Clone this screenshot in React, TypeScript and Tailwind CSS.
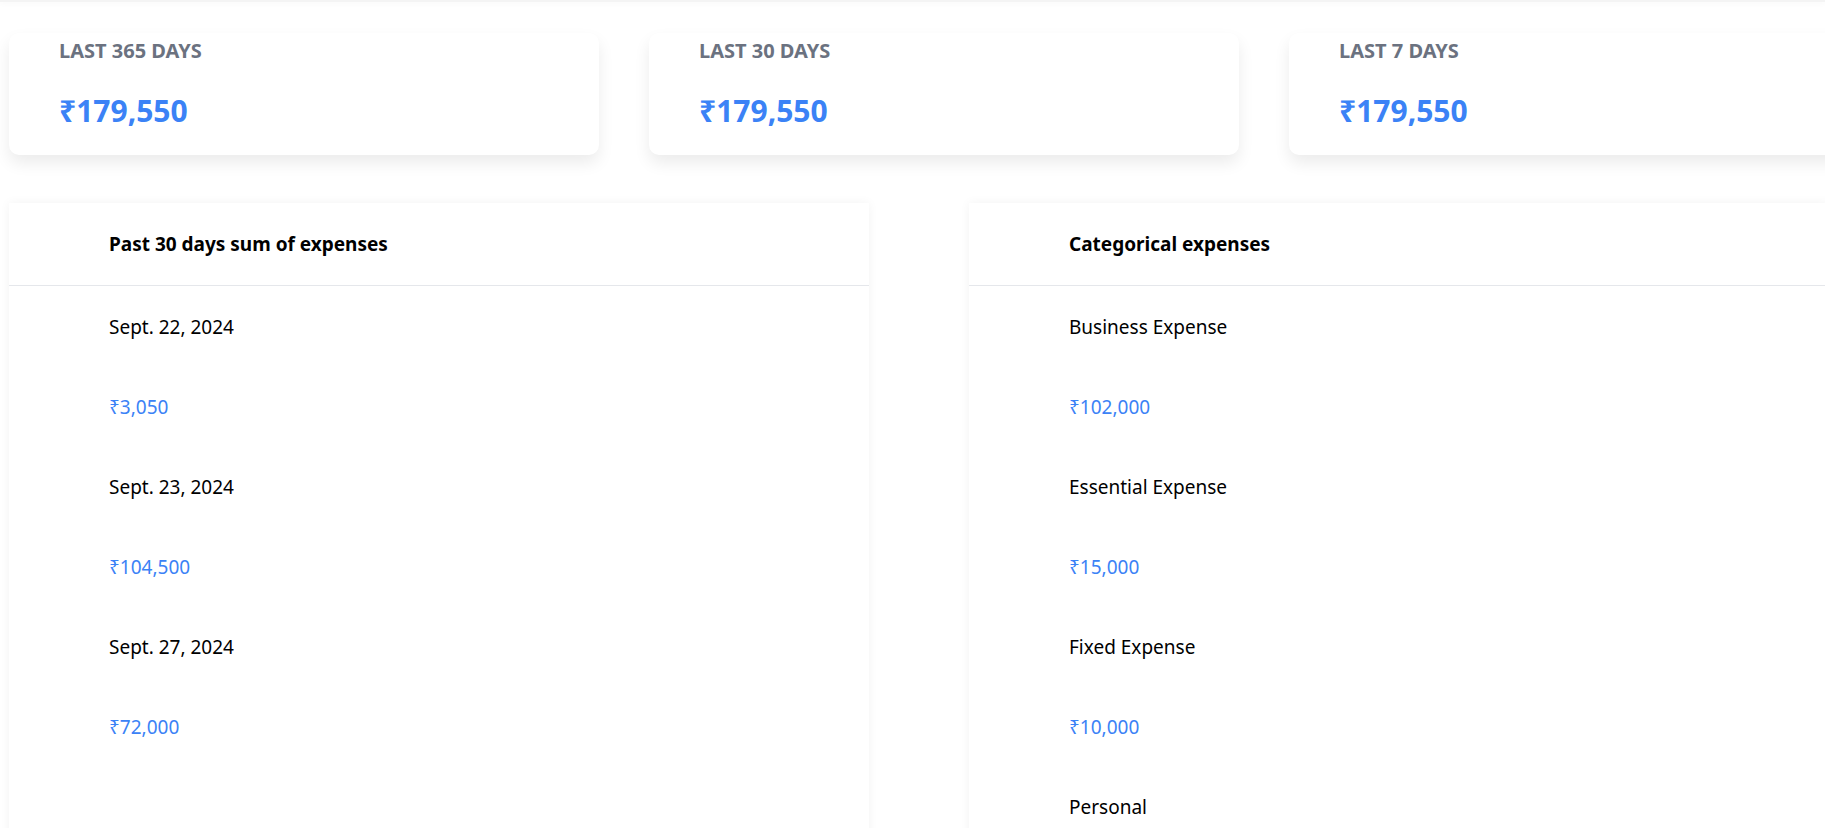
const summaries = [
  { label: 'LAST 365 DAYS', amount: '₹179,550' },
  { label: 'LAST 30 DAYS', amount: '₹179,550' },
  { label: 'LAST 7 DAYS', amount: '₹179,550' },
];

const daily = [
  { name: 'Sept. 22, 2024', amount: '₹3,050' },
  { name: 'Sept. 23, 2024', amount: '₹104,500' },
  { name: 'Sept. 27, 2024', amount: '₹72,000' },
];

const categories = [
  { name: 'Business Expense', amount: '₹102,000' },
  { name: 'Essential Expense', amount: '₹15,000' },
  { name: 'Fixed Expense', amount: '₹10,000' },
  { name: 'Personal', amount: '₹2,550' },
];

type Row = { name: string; amount: string };

function SummaryCard({ label, amount }: { label: string; amount: string }) {
  return (
    <div className="w-[590px] shrink-0 rounded-[10px] bg-white pl-[50px] pt-[4px] pb-[26px] shadow-[0_8px_16px_rgba(0,0,0,0.08)]">
      <p className="text-[20px] leading-[28px] font-bold text-[#6b7280]">{label}</p>
      <p className="mt-[28px] text-[30px] leading-[36px] font-bold text-[#3b82f6]">{amount}</p>
    </div>
  );
}

function ExpensePanel({ title, rows }: { title: string; rows: Row[] }) {
  return (
    <div className="w-[860px] shrink-0 bg-white shadow-[0_0_10px_rgba(0,0,0,0.05)]">
      <div className="border-b border-[#e5e7eb] px-[100px] pt-[27px] pb-[27px]">
        <h2 className="text-[19px] leading-[28px] font-bold text-black">{title}</h2>
      </div>
      <div className="flex flex-col gap-[52px] px-[100px] pt-[27px] pb-10">
        {rows.map((row) => (
          <div key={row.name} className="contents">
            <p className="text-[19px] leading-[28px] text-black">{row.name}</p>
            <p className="text-[19px] leading-[28px] text-[#3b82f6]">{row.amount}</p>
          </div>
        ))}
      </div>
    </div>
  );
}

export default function App() {
  return (
    <div className="h-[828px] overflow-hidden bg-white font-['Noto_Sans',sans-serif]">
      <div className="h-[2px] bg-[#f4f4f4] shadow-[0_2px_4px_rgba(0,0,0,0.04)]" />
      <div className="flex gap-[50px] pl-[9px] pt-[31px]">
        {summaries.map((s) => (
          <SummaryCard key={s.label} label={s.label} amount={s.amount} />
        ))}
      </div>
      <div className="mt-[48px] flex gap-[100px] pl-[9px]">
        <ExpensePanel title="Past 30 days sum of expenses" rows={daily} />
        <ExpensePanel title="Categorical expenses" rows={categories} />
      </div>
    </div>
  );
}
